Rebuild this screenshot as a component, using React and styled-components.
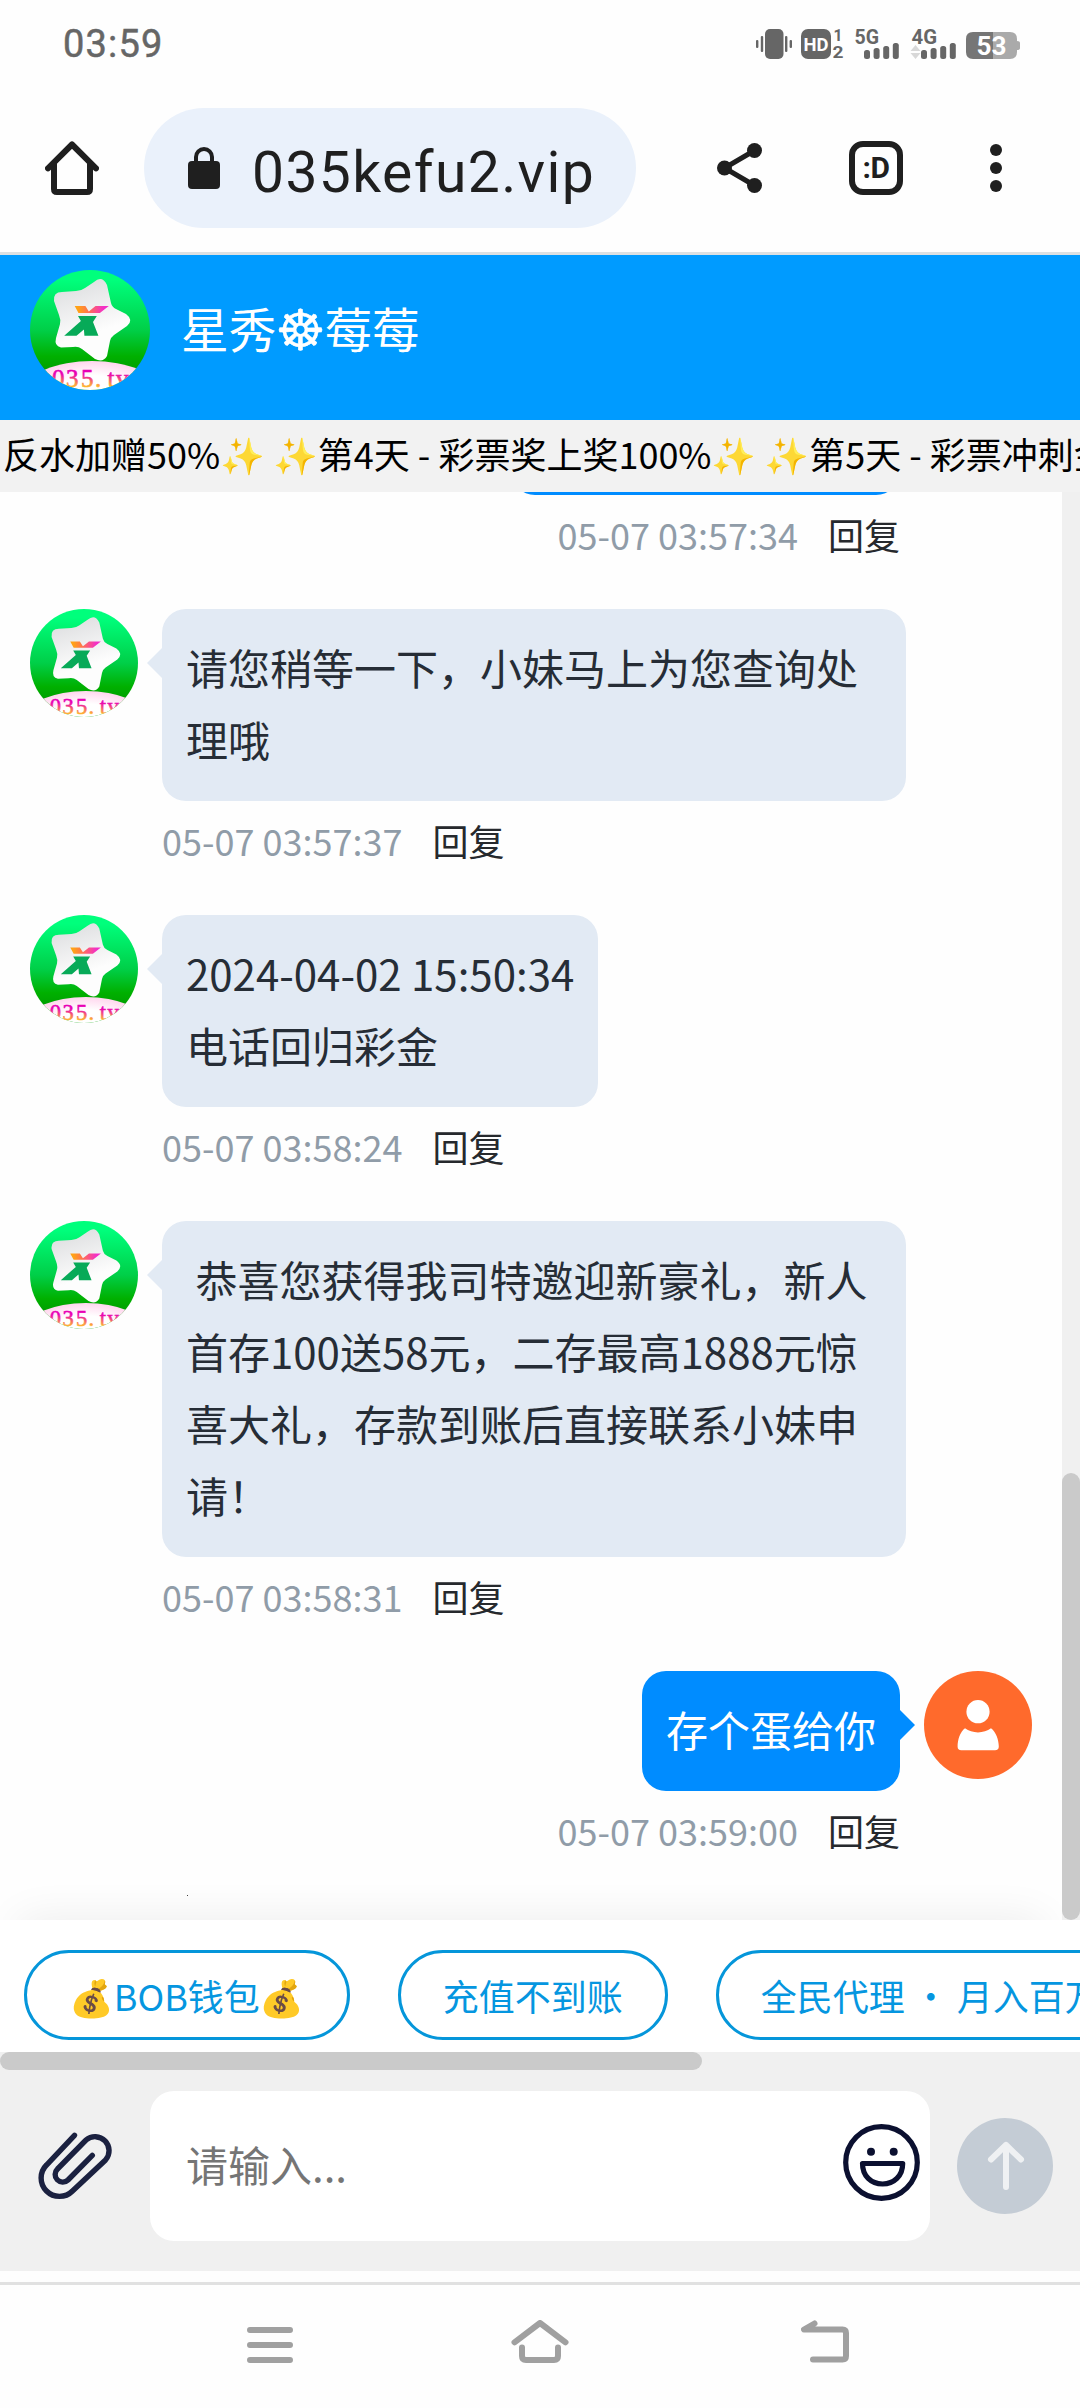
import React, { useId } from 'react';
import styled, { createGlobalStyle, css } from 'styled-components';

const GlobalStyle = createGlobalStyle`
  * {
    box-sizing: border-box;
  }
  body {
    margin: 0;
    background: #fefefe;
    font-family: 'Noto Sans CJK SC', 'Noto Color Emoji', sans-serif;
  }
  svg {
    display: block;
    flex: none;
  }
`;

const Screen = styled.div`
  width: 1080px;
  height: 2408px;
  display: flex;
  flex-direction: column;
  overflow: hidden;
  background: #fefefe;
`;

/* phone status bar */

const StatusBar = styled.header`
  height: 84px;
  flex: none;
  display: flex;
  align-items: center;
  justify-content: space-between;
  padding: 4px 60px 0 63px;
`;

const Clock = styled.time`
  font: 400 38px/1 Roboto, sans-serif;
  letter-spacing: 1.2px;
  color: #666;
  -webkit-text-stroke: 0.5px #666;
`;

const StatusIcons = styled.div`
  display: flex;
  align-items: center;
`;

/* browser toolbar */

const Toolbar = styled.div`
  height: 171px;
  flex: none;
  display: flex;
  align-items: center;
  padding: 0 78px 0 45px;
  border-bottom: 3px solid #dce0e2;
`;

const UrlPill = styled.div`
  width: 492px;
  height: 120px;
  margin: 0 81px 0 45px;
  padding: 0 44px;
  border-radius: 60px;
  background: #eaf1fb;
  display: flex;
  align-items: center;
`;

const Url = styled.span`
  margin-left: 32px;
  padding-top: 8px;
  font: 400 57px/1 Roboto, sans-serif;
  letter-spacing: 1.4px;
  color: #1f1f1f;
  white-space: nowrap;
`;

const TabCount = styled.div`
  width: 54px;
  height: 54px;
  margin: 0 87px;
  border: 6px solid #1f1f1f;
  border-radius: 14px;
  display: flex;
  align-items: center;
  justify-content: center;
  font: 700 30px/1 Roboto, sans-serif;
  letter-spacing: -0.5px;
  color: #1f1f1f;
`;

/* chat header */

const ChatHeader = styled.div`
  height: 165px;
  flex: none;
  display: flex;
  align-items: flex-start;
  padding: 15px 30px;
  background: #009bff;
`;

const AgentName = styled.h1`
  display: flex;
  align-items: center;
  margin: 0 0 0 31px;
  font-size: 47.7px;
  font-weight: 400;
  line-height: 115px;
  color: #fff;
`;

const Wheel = styled.span`
  width: 48px;
  padding-top: 6px;
  display: flex;
  justify-content: center;
  font-family: 'DejaVu Sans', sans-serif;
  font-size: 56px;
  line-height: 109px;
  -webkit-text-stroke: 0.5px #fff;
`;

const Notice = styled.div`
  height: 72px;
  flex: none;
  overflow: hidden;
  padding-left: 3px;
  background: #f2f2f2;
  color: #000;
  font-size: 36px;
  line-height: 67px;
  white-space: nowrap;
`;

/* conversation */

const ChatArea = styled.main`
  height: 1428px;
  flex: none;
  display: flex;
`;

const Messages = styled.div`
  position: relative;
  flex: 1;
  display: flex;
  flex-direction: column;
  justify-content: flex-end;
  overflow: hidden;
  padding: 0 30px;

  &::after {
    content: '';
    position: absolute;
    left: 20px;
    right: 20px;
    bottom: -40px;
    height: 40px;
    box-shadow: 0 0 44px rgba(0, 0, 0, 0.08);
  }
`;

const Message = styled.div`
  display: flex;
  align-items: flex-start;
  gap: 24px;
  margin-bottom: 30px;
  flex-direction: ${p => (p.$mine ? 'row-reverse' : 'row')};
`;

const AvatarSlot = styled.div`
  width: 108px;
  flex: none;
`;

const MessageBody = styled.div`
  display: flex;
  flex-direction: column;
  align-items: ${p => (p.$mine ? 'flex-end' : 'flex-start')};
`;

const Bubble = styled.div`
  position: relative;
  max-width: 744px;
  min-width: ${p => p.$minWidth || 0}px;
  padding: 22px 24px 26px;
  border-radius: 24px;
  font-size: 42px;
  line-height: 72px;
  white-space: pre-wrap;
  background: ${p => (p.$mine ? '#008cff' : '#e2eaf4')};
  color: ${p => (p.$mine ? '#fff' : '#262d36')};

  &::before {
    content: '';
    position: absolute;
    top: 39px;
    border: 15px solid transparent;
    ${p =>
      p.$mine
        ? css`
            left: 100%;
            border-right-width: 0;
            border-left-color: #008cff;
          `
        : css`
            right: 100%;
            border-left-width: 0;
            border-right-color: #e2eaf4;
          `}
  }
`;

const Meta = styled.div`
  height: 84px;
  padding-bottom: 6px;
  display: flex;
  align-items: center;
  gap: 30px;
  font-size: 36px;
  line-height: 54px;
  color: #909ca8;
`;

const Reply = styled.span`
  color: #26292d;
`;

const Typing = styled.div`
  width: 1px;
  height: 1px;
  flex: none;
  margin: -10px 0 24px 157px;
  background: #444;
`;

const ScrollTrack = styled.div`
  width: 18px;
  display: flex;
  align-items: flex-end;
  background: #f0f0f0;
`;

const ScrollThumb = styled.div`
  width: 18px;
  height: 447px;
  border-radius: 9px;
  background: #cacaca;
`;

/* shortcuts and input */

const Shortcuts = styled.div`
  height: 132px;
  flex: none;
  display: flex;
  gap: 48px;
  padding: 30px 24px 12px;
  overflow: hidden;
  background: #fff;
`;

const Shortcut = styled.button`
  height: 90px;
  flex: none;
  padding: 0 42px 1px;
  border: 3px solid #0596da;
  border-radius: 45px;
  background: none;
  color: #0596e0;
  font: inherit;
  font-size: 36px;
  line-height: 82px;
  white-space: pre;
`;

const HorizontalTrack = styled.div`
  height: 18px;
  flex: none;
  background: #f0f0f0;
`;

const HorizontalThumb = styled.div`
  width: 702px;
  height: 18px;
  border-radius: 9px;
  background: #cacaca;
`;

const Composer = styled.div`
  height: 201px;
  flex: none;
  display: flex;
  align-items: center;
  padding: 0 27px 9px 36px;
  background: #f0f0f0;
`;

const InputBox = styled.div`
  width: 780px;
  height: 150px;
  margin: 0 27px 0 34px;
  padding: 0 10px 7px 36px;
  border-radius: 24px;
  background: #fff;
  display: flex;
  align-items: center;
  justify-content: space-between;
`;

const Input = styled.input`
  width: 600px;
  height: 72px;
  padding: 2px 0 0;
  border: 0;
  outline: 0;
  background: none;
  font: inherit;
  font-size: 42px;

  &::placeholder {
    color: #757575;
    opacity: 1;
  }
`;

const NavBar = styled.nav`
  flex: 1;
  margin-top: 11px;
  padding: 35px 231px 0 247px;
  border-top: 3px solid #e1e1e1;
  display: flex;
  align-items: flex-start;
`;

const Logo = ({ size }) => {
  const id = useId();
  const ref = name => `${id}${name}`;
  const url = name => `url(#${ref(name)})`;
  return (
    <svg width={size} height={size} viewBox="0 0 120 120">
      <defs>
        <clipPath id={ref('clip')}>
          <circle cx="60" cy="60" r="60" />
        </clipPath>
        <linearGradient id={ref('bg')} x1="0" y1="0" x2="0" y2="1">
          <stop offset="0.08" stopColor="#00ff7c" />
          <stop offset="0.5" stopColor="#00cf48" />
          <stop offset="0.72" stopColor="#00b000" />
          <stop offset="0.85" stopColor="#009e00" />
        </linearGradient>
        <linearGradient id={ref('star')} x1="0" y1="0" x2="0.3" y2="1">
          <stop offset="0" stopColor="#d9dadc" />
          <stop offset="0.75" stopColor="#fdfdfd" />
        </linearGradient>
        <linearGradient id={ref('top')}>
          <stop offset="0.1" stopColor="#ffa216" />
          <stop offset="0.4" stopColor="#ff7250" />
          <stop offset="0.85" stopColor="#f32fc8" />
        </linearGradient>
        <linearGradient id={ref('text')} x1="0" y1="0" x2="0" y2="1">
          <stop offset="0.35" stopColor="#e800b4" />
          <stop offset="0.8" stopColor="#ffb42e" />
        </linearGradient>
        <radialGradient id={ref('hill')}>
          <stop offset="0.5" stopColor="#fff" />
          <stop offset="1" stopColor="#ffd6ee" />
        </radialGradient>
      </defs>
      <g clipPath={url('clip')}>
        <rect width="120" height="120" fill={url('bg')} />
        <path
          d="M64 12 Q72 5 77 15 L81 33 Q82 37 86 39 L96 44 Q104 50 97 56 L84 65 Q81 67 80 71 L77 86 Q73 93 65 89 L52 79 Q48 76 43 77 L31 77.5 Q24 76 26 68 L30 54 Q31 50 29 45 L24 31 Q23 22 32 22 L46 21 Q51 21 55 18 Z"
          fill={url('star')}
        />
        <path d="M44.7 36H55.4L58.8 41.5L65.5 36H78.8L69.9 43H48.5Z" fill={url('top')} />
        <path
          d="M48 46H66.8L63 52L68.4 65.7H54.4L53.9 59.5L46.5 65.7H34.2L50.9 51Z"
          fill="#07aa58"
        />
        <ellipse cx="62" cy="120" rx="66" ry="29" fill={url('hill')} />
        <text
          x="22 36 51 65 77.5 86"
          y="116.5"
          fontFamily="Liberation Serif, serif"
          fontSize="25"
          fill={url('text')}
          stroke={url('text')}
          strokeWidth="0.6"
        >
          035.tv
        </text>
      </g>
    </svg>
  );
};

const UserAvatar = () => (
  <svg width="108" height="108" viewBox="0 0 108 108">
    <circle cx="54" cy="54" r="54" fill="#ff6a2c" />
    <circle cx="54" cy="40.7" r="11.6" fill="#fff" />
    <path
      d="M41 57.3C48 62.8 60 62.8 67 57.3C72 61 74.8 69 74.8 75.5Q74.8 79.3 71 79.3H37.3Q33.6 79.3 33.6 75.5C33.6 69 36 61 41 57.3Z"
      fill="#fff"
    />
  </svg>
);

const SignalBars = ({ x }) => (
  <>
    {[48, 46, 44, 41].map((top, i) => (
      <rect key={top} x={x + i * 9.6} y={top - 27} width="6" height={57 - top} rx="2.5" />
    ))}
  </>
);

const StatusText = styled.text.attrs({ lengthAdjust: 'spacingAndGlyphs' })`
  font-family: Roboto, sans-serif;
  font-weight: 700;
`;

const StatusGlyphs = () => (
  <StatusIcons>
    <svg width="264" height="50" viewBox="0 -10 264 50" fill="#666">
      <rect x="9" width="18.5" height="30" rx="5" />
      <rect x="4.8" y="7" width="2.4" height="16" rx="1" />
      <rect y="11" width="2.4" height="8" rx="1" />
      <rect x="29" y="7" width="2.4" height="16" rx="1" />
      <rect x="33.6" y="11" width="2.4" height="8" rx="1" />
      <rect x="45" width="30" height="30" rx="7" />
      <StatusText x="47.5" y="21.8" fontSize="19" fill="#fff" textLength="25">
        HD
      </StatusText>
      <StatusText x="77.5" y="11.5" fontSize="16" textLength="9">1</StatusText>
      <StatusText x="76.5" y="29" fontSize="16" textLength="11">2</StatusText>
      <StatusText x="98.5" y="14.5" fontSize="20" textLength="24.5">5G</StatusText>
      <SignalBars x={108} />
      <StatusText x="155.5" y="14.5" fontSize="20" textLength="25.5">4G</StatusText>
      <path d="M159.5 16L164.5 22H154.5ZM159.5 30L164.5 24H154.5Z" fill="#d8d8d8" />
      <SignalBars x={165} />
      <path d="M217 3H237V30H217Q210 30 210 23V10Q210 3 217 3Z" fill="#767676" />
      <path
        d="M237 3H254Q261 3 261 10V12Q264 12 264 14V19Q264 21 261 21V23Q261 30 254 30H237Z"
        fill="#aaa"
      />
      <StatusText x="220.5" y="26" fontSize="26" fill="#fff" textLength="30">
        53
      </StatusText>
    </svg>
  </StatusIcons>
);

const HomeIcon = () => (
  <svg width="54" height="54" fill="none" stroke="#1f1f1f" strokeWidth="6" strokeLinejoin="round">
    <path d="M3 27.3L27 3.5L51 27.3" strokeLinecap="round" />
    <path d="M9 21V48Q9 51 12 51H42Q45 51 45 48V21" />
  </svg>
);

const LockIcon = () => (
  <svg width="32" height="42" viewBox="0 0 32 42">
    <rect y="14" width="32" height="28" rx="4" fill="#1f1f1f" />
    <path d="M8 16V10A8 8 0 0 1 24 10V16" fill="none" stroke="#1f1f1f" strokeWidth="4" />
  </svg>
);

const ShareIcon = () => (
  <svg width="45" height="50" viewBox="0 0 45 50" fill="#1f1f1f">
    <path d="M37.5 7.5L7.5 25L37.5 42.5" fill="none" stroke="#1f1f1f" strokeWidth="5" />
    <circle cx="37.5" cy="7.5" r="7.5" />
    <circle cx="7.5" cy="25" r="7.5" />
    <circle cx="37.5" cy="42.5" r="7.5" />
  </svg>
);

const MoreIcon = () => (
  <svg width="12" height="48" viewBox="0 0 12 48" fill="#1f1f1f">
    <circle cx="6" cy="6" r="6" />
    <circle cx="6" cy="24" r="6" />
    <circle cx="6" cy="42" r="6" />
  </svg>
);

const ClipIcon = () => (
  <svg width="80" height="72" viewBox="0 0 80 72" fill="none" stroke="#1b2140" strokeWidth="5.4" strokeLinecap="round">
    <path d="M38.5 5.3L10.5 35A18.2 18.2 0 0 0 36.5 61L69.5 30A14 14 0 0 0 50 10L21.5 39A7.6 7.6 0 0 0 32 50L56.3 25.3" />
  </svg>
);

const SmileIcon = () => (
  <svg width="77" height="77" viewBox="0 0 77 77" fill="none" stroke="#0b1030" strokeWidth="5.2">
    <circle cx="38.5" cy="38.5" r="35.8" />
    <path d="M19.5 39.5H59.7C59.7 52 51 60 39.6 60C28 60 19.5 52 19.5 39.5Z" strokeLinejoin="round" />
    <circle cx="28" cy="27.7" r="4" fill="#0b1030" stroke="none" />
    <circle cx="50.7" cy="27.7" r="4" fill="#0b1030" stroke="none" />
  </svg>
);

const SendIcon = () => (
  <svg width="96" height="96" viewBox="0 0 96 96">
    <circle cx="48" cy="48" r="48" fill="#c4ccd5" />
    <path
      d="M49 69V27M34 41.5L49 27L64 41.5"
      fill="none"
      stroke="#eff1f3"
      strokeWidth="6"
      strokeLinecap="round"
      strokeLinejoin="round"
    />
  </svg>
);

const NavIcon = styled.svg.attrs({
  fill: 'none',
  stroke: '#a0a0a0',
  strokeWidth: 6,
  strokeLinecap: 'round',
  strokeLinejoin: 'round',
})``;

const NavHome = styled(NavIcon)`
  margin: 0 232px 0 218px;
`;

const ChatMessage = ({ mine, time, minWidth, children }) => (
  <Message $mine={mine}>
    <AvatarSlot>{mine ? <UserAvatar /> : <Logo size={108} />}</AvatarSlot>
    <MessageBody $mine={mine}>
      <Bubble $mine={mine} $minWidth={minWidth}>{children}</Bubble>
      <Meta>
        <time>{time}</time>
        <Reply>回复</Reply>
      </Meta>
    </MessageBody>
  </Message>
);

const messages = [
  { time: '05-07 03:57:34', mine: true, minWidth: 389, text: ' ' },
  { time: '05-07 03:57:37', text: '请您稍等一下，小妹马上为您查询处理哦' },
  { time: '05-07 03:58:24', text: '2024-04-02 15:50:34\n电话回归彩金' },
  {
    time: '05-07 03:58:31',
    text: ' 恭喜您获得我司特邀迎新豪礼，新人首存100送58元，二存最高1888元惊喜大礼，存款到账后直接联系小妹申请！',
  },
  { time: '05-07 03:59:00', mine: true, text: '存个蛋给你' },
];

const shortcuts = ['💰BOB钱包💰', '充值不到账', '全民代理 ・ 月入百万'];

const App = () => (
  <>
    <GlobalStyle />
    <Screen>
      <StatusBar>
        <Clock>03:59</Clock>
        <StatusGlyphs />
      </StatusBar>
      <Toolbar>
        <HomeIcon />
        <UrlPill>
          <LockIcon />
          <Url>035kefu2.vip</Url>
        </UrlPill>
        <ShareIcon />
        <TabCount>:D</TabCount>
        <MoreIcon />
      </Toolbar>
      <ChatHeader>
        <Logo size={120} />
        <AgentName>
          星秀<Wheel>☸</Wheel>莓莓
        </AgentName>
      </ChatHeader>
      <Notice>反水加赠50%✨ ✨第4天 - 彩票奖上奖100%✨ ✨第5天 - 彩票冲刺金</Notice>
      <ChatArea>
        <Messages>
          {messages.map(({ text, ...rest }) => (
            <ChatMessage key={rest.time} {...rest}>
              {text}
            </ChatMessage>
          ))}
          <Typing />
        </Messages>
        <ScrollTrack>
          <ScrollThumb />
        </ScrollTrack>
      </ChatArea>
      <Shortcuts>
        {shortcuts.map(label => (
          <Shortcut key={label}>{label}</Shortcut>
        ))}
      </Shortcuts>
      <HorizontalTrack>
        <HorizontalThumb />
      </HorizontalTrack>
      <Composer>
        <ClipIcon />
        <InputBox>
          <Input placeholder="请输入..." />
          <SmileIcon />
        </InputBox>
        <SendIcon />
      </Composer>
      <NavBar>
        <NavIcon width="46" height="43" viewBox="0 0 46 43">
          <path d="M3 10H43M3 25H43M3 40H43" />
        </NavIcon>
        <NavHome width="58" height="43" viewBox="0 0 58 43">
          <path d="M3.5 22.3L29 3L54.5 22.3M11 27.5V36Q11 40 15 40H43Q47 40 47 36V27.5" />
        </NavHome>
        <NavIcon width="48" height="43" viewBox="0 0 48 43">
          <path d="M13.5 3.5L3 9.5H41.5Q45 9.5 45 13V36Q45 39.5 41.5 39.5H12" />
        </NavIcon>
      </NavBar>
    </Screen>
  </>
);

export default App;
